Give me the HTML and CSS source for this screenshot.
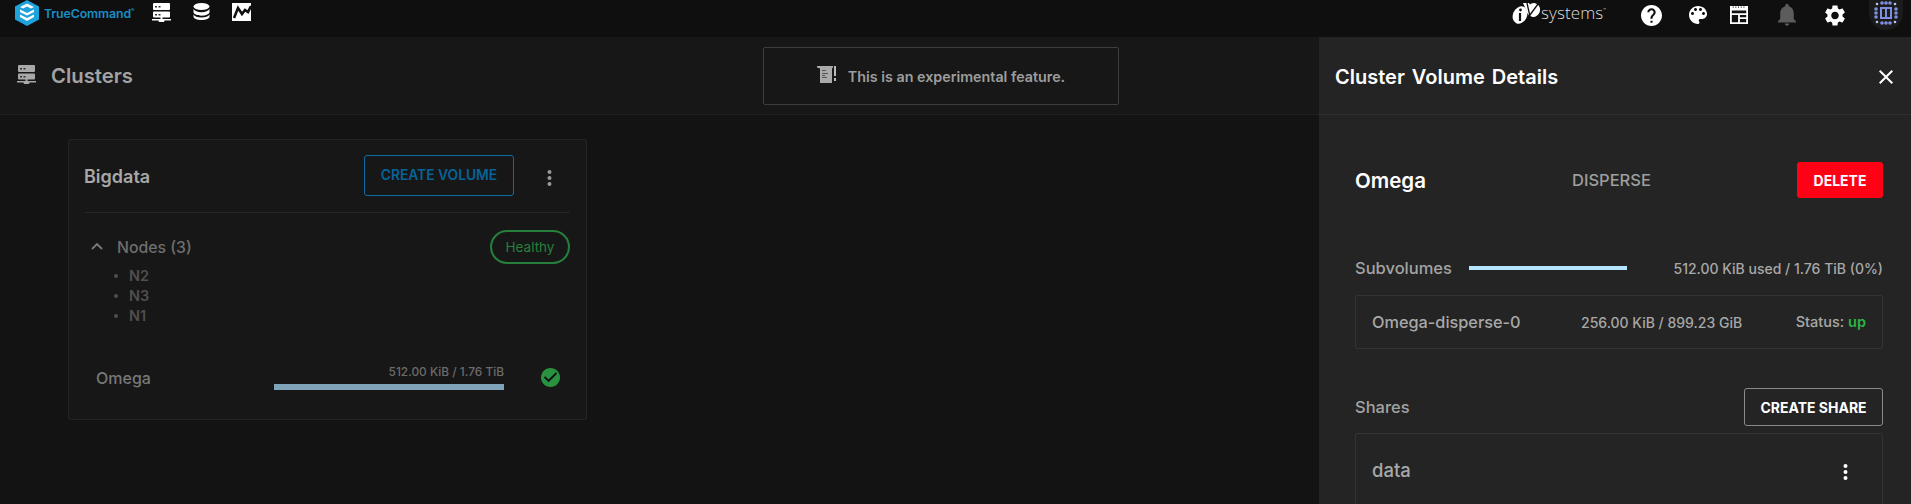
FILE: index.html
```html
<!DOCTYPE html>
<html lang="en">
<head>
<meta charset="utf-8">
<title>TrueCommand Clusters</title>
<link rel="stylesheet" href="styles.css">
</head>
<body>
<header class="topbar">
  <div class="brand">
    <svg class="logo" viewBox="0 0 24 26"><path fill="#1ea3dc" d="M12 0l12 6.500v13L12 26 0 19.500v-13z"/><path fill="#fff" d="M12 3.500l7 3.500-3 1.600-4-2-4 2-3-1.600zM5 9.500l7 3.500 7-3.500v2.500l-7 3.500L5 12zM5 14.500l7 3.500 7-3.500V17l-7 4-7-4z"/><path fill="#1ea3dc" d="M9.500 10.500L12 9l2.500 1.500L12 12z"/></svg>
    <span class="brand-name">TrueCommand<sup class="tm">®</sup></span>
  </div>
  <nav class="nav-icons">
    <svg class="nav-icon" viewBox="0 0 19 19"><path fill="#fff" d="M2 0h15a1 1 0 0 1 1 1v5a1 1 0 0 1-1 1H2a1 1 0 0 1-1-1V1a1 1 0 0 1 1-1zm0 8.500h15a1 1 0 0 1 1 1v4a1 1 0 0 1-1 1H2a1 1 0 0 1-1-1v-4a1 1 0 0 1 1-1zM8.500 14.500h2V16H19v1.500h-6.500a3 2 0 0 1-6 0H0V16h8.500z"/><path fill="#333" d="M3 3h2v1.500H3zM6.500 3h2v1.500h-2zM3 11h2v1.500H3zM6.500 11h2v1.500h-2z"/></svg>
    <svg class="nav-icon db" viewBox="0 0 17 17"><ellipse cx="8.500" cy="3.500" rx="8" ry="3.500" fill="#fff"/><path fill="#fff" d="M.5 6c1 2 4 3.200 8 3.200s7-1.200 8-3.200v3c0 2-3.500 3.700-8 3.700S.5 11 .5 9zM.5 11.500c1 2 4 3 8 3s7-1 8-3V13.500c0 2-3.500 3.500-8 3.500s-8-1.500-8-3.500z"/></svg>
    <svg class="nav-icon chart" viewBox="0 0 19 18"><path fill="#fff" d="M0 0h19v18H0z"/><path fill="none" stroke="#111" stroke-width="2.600" d="M2 15L6 5l4 6 3-4 3 2 3-6"/></svg>
  </nav>
  <div class="top-right">
    <div class="ix">
      <svg class="ix-mark" viewBox="0 0 28 22"><ellipse cx="8" cy="13" rx="7" ry="9" fill="#fff" transform="rotate(25 8 13)"/><ellipse cx="21.500" cy="8" rx="6.500" ry="7" fill="#fff" transform="rotate(25 21.500 8)"/><path fill="#fff" d="M11 1l6 0 4 7-5 4z"/><path stroke="#111" stroke-width="1.300" fill="none" d="M15 1l4 18M26 2L15 17"/><path stroke="#111" stroke-width="2.200" d="M8 11v8"/><circle cx="8.500" cy="8" r="1.400" fill="#111"/></svg>
      <span class="ix-name">systems<sup class="tm2">™</sup></span>
    </div>
    <svg class="tool help" viewBox="2 2 20 20"><path fill="#fff" d="M12 2C6.480 2 2 6.480 2 12s4.480 10 10 10 10-4.480 10-10S17.520 2 12 2zm1 17h-2v-2h2v2zm2.070-7.750l-.9.920C13.450 12.900 13 13.500 13 15h-2v-.5c0-1.100.45-2.100 1.170-2.830l1.240-1.260c.37-.36.59-.86.59-1.410 0-1.100-.9-2-2-2s-2 .9-2 2H8c0-2.210 1.790-4 4-4s4 1.790 4 4c0 .88-.36 1.680-.93 2.250z"/></svg>
    <svg class="tool palette" viewBox="3 3 18 18"><path fill="#fff" d="M12 3c-4.970 0-9 4.030-9 9s4.030 9 9 9c.83 0 1.500-.67 1.500-1.500 0-.39-.15-.74-.39-1.010-.23-.26-.38-.61-.38-.99 0-.83.67-1.500 1.500-1.500H16c2.760 0 5-2.240 5-5 0-4.420-4.030-8-9-8zm-5.500 9c-.83 0-1.500-.67-1.500-1.500S5.670 9 6.500 9 8 9.670 8 10.500 7.330 12 6.500 12zm3-4C8.670 8 8 7.330 8 6.500S8.670 5 9.500 5s1.500.67 1.500 1.500S10.330 8 9.500 8zm5 0c-.83 0-1.500-.67-1.500-1.500S13.670 5 14.500 5s1.500.67 1.500 1.500S15.330 8 14.500 8zm3 4c-.83 0-1.500-.67-1.500-1.500S16.670 9 17.500 9s1.500.67 1.500 1.500-.67 1.500-1.500 1.500z"/></svg>
    <svg class="tool table" viewBox="0 0 20 20"><path fill="#fff" d="M0 0h20v20H0z"/><path fill="#111" d="M2 5h16v3H2zM2 10h7v8H2zM11 10h7v2.500h-7zM11 14.500h7V18h-7zM3 .5h1V2H3zM6 .5h1V2H6zM9 .5h1V2H9zM12 .5h1V2h-1zM15 .5h1V2h-1z"/></svg>
    <svg class="tool bell" viewBox="4 2 16 20"><path fill="#5c5c5c" d="M12 22c1.100 0 2-.9 2-2h-4c0 1.100.89 2 2 2zm6-6v-5c0-3.070-1.640-5.640-4.500-6.320V4c0-.83-.67-1.500-1.500-1.500s-1.500.67-1.500 1.500v.68C7.630 5.360 6 7.920 6 11v5l-2 2v1h16v-1l-2-2z"/></svg>
    <svg class="tool gear" viewBox="2.500 2 19 20"><path fill="#fff" d="M19.140 12.940c.04-.3.06-.61.06-.94 0-.32-.02-.64-.07-.94l2.030-1.580c.18-.14.23-.41.12-.61l-1.920-3.320c-.12-.22-.37-.29-.59-.22l-2.390.96c-.5-.38-1.030-.7-1.620-.94l-.36-2.540c-.04-.24-.24-.41-.48-.41h-3.840c-.24 0-.43.17-.47.41l-.36 2.540c-.59.24-1.130.57-1.620.94l-2.390-.96c-.22-.08-.47 0-.59.22L2.740 8.870c-.12.21-.08.47.12.61l2.030 1.580c-.05.3-.09.63-.09.94s.02.64.07.94l-2.030 1.580c-.18.14-.23.41-.12.61l1.920 3.320c.12.22.37.29.59.22l2.390-.96c.5.38 1.030.7 1.620.94l.36 2.540c.05.24.24.41.48.41h3.840c.24 0 .44-.17.47-.41l.36-2.540c.59-.24 1.130-.56 1.620-.94l2.390.96c.22.08.47 0 .59-.22l1.920-3.320c.12-.22.07-.47-.12-.61l-2.010-1.580zM12 15.600c-1.980 0-3.600-1.620-3.600-3.600s1.620-3.600 3.600-3.600 3.600 1.620 3.600 3.600-1.620 3.600-3.600 3.600z"/></svg>
    <div class="avatar">
      <svg class="avatar-art" viewBox="0 0 24 24"><g fill="#7f8fe0"><path fill-rule="evenodd" d="M6 6h12v12H6zM8 8v8h3V8zM13 8v8h3V8z"/><circle cx="2" cy="8" r="1.800"/><circle cx="2" cy="12" r="1.800"/><circle cx="2" cy="16" r="1.800"/><circle cx="22" cy="8" r="1.800"/><circle cx="22" cy="12" r="1.800"/><circle cx="22" cy="16" r="1.800"/><circle cx="8" cy="2" r="1.800"/><circle cx="12" cy="2" r="1.800"/><circle cx="16" cy="2" r="1.800"/><circle cx="8" cy="22" r="1.800"/><circle cx="12" cy="22" r="1.800"/><circle cx="16" cy="22" r="1.800"/></g><g fill="#b9c2f0"><circle cx="3" cy="3" r="1.300"/><circle cx="21" cy="3" r="1.300"/><circle cx="3" cy="21" r="1.300"/><circle cx="21" cy="21" r="1.300"/></g></svg>
    </div>
  </div>
</header>

<div class="workspace">
  <main class="content">
    <div class="page-head">
      <div class="page-title">
        <svg class="title-icon" viewBox="0 0 19 19"><path fill="#a8a8a8" d="M2 0h15a1 1 0 0 1 1 1v5a1 1 0 0 1-1 1H2a1 1 0 0 1-1-1V1a1 1 0 0 1 1-1zm0 8.500h15a1 1 0 0 1 1 1v4a1 1 0 0 1-1 1H2a1 1 0 0 1-1-1v-4a1 1 0 0 1 1-1zM8.500 14.500h2V16H19v1.500h-6.500a3 2 0 0 1-6 0H0V16h8.500z"/><path fill="#333" d="M3 3h2v1.500H3zM6.500 3h2v1.500h-2zM3 11h2v1.500H3zM6.500 11h2v1.500h-2z"/></svg>
        <h1 class="title-text">Clusters</h1>
      </div>
      <div class="notice">
        <svg class="beaker" viewBox="0 0 20 20"><path fill="#aaa" d="M0 1h16v1.500l-1 1V18H3V3.500L0 2.500z"/><path fill="#555" d="M5 5h4v1H5zM5 8h6v1H5zM5 10h3v1H5zM5 12h5v1H5z"/><path fill="#bbb" d="M17 1h2v10h-2zM17 13h2v3h-2z"/></svg>
        <span class="notice-text">This is an experimental feature.</span>
      </div>
    </div>
    <section class="card">
      <div class="card-head">
        <h2 class="card-title">Bigdata</h2>
        <button class="btn-outline-blue">CREATE VOLUME</button>
        <svg class="dots dim-dots" viewBox="0 0 4 16"><circle cx="2" cy="2" r="2"/><circle cx="2" cy="8" r="2"/><circle cx="2" cy="14" r="2"/></svg>
      </div>
      <div class="nodes">
        <div class="nodes-main">
          <div class="nodes-head">
            <svg class="chev" viewBox="0 0 12 8"><path fill="none" stroke="#7a7a7a" stroke-width="1.800" d="M1 7l5-5 5 5"/></svg>
            <span class="nodes-label">Nodes (3)</span>
          </div>
          <ul class="node-list">
            <li>N2</li>
            <li>N3</li>
            <li>N1</li>
          </ul>
        </div>
        <span class="pill">Healthy</span>
      </div>
      <div class="vol-row">
        <span class="vol-name">Omega</span>
        <div class="vol-usage">
          <span class="vol-size">512.00 KiB / 1.76 TiB</span>
          <div class="vol-bar"></div>
        </div>
        <svg class="vol-check" viewBox="2 2 20 20"><path fill="#2a9140" d="M12 2C6.480 2 2 6.480 2 12s4.480 10 10 10 10-4.480 10-10S17.520 2 12 2z"/><path fill="#111" d="M10 17l-5-5 1.410-1.410L10 14.170l7.590-7.590L19 8z"/></svg>
      </div>
    </section>
  </main>

  <aside class="panel">
    <div class="panel-head">
      <h2 class="panel-title">Cluster Volume Details</h2>
      <svg class="close" viewBox="5 5 14 14"><path fill="#fff" d="M19 6.410L17.590 5 12 10.590 6.410 5 5 6.410 10.590 12 5 17.590 6.410 19 12 13.410 17.590 19 19 17.590 13.410 12z"/></svg>
    </div>
    <div class="panel-body">
      <div class="vol-head">
        <h3 class="vol-title">Omega</h3>
        <span class="vol-type">DISPERSE</span>
        <button class="btn-delete">DELETE</button>
      </div>
      <div class="sub-head">
        <span class="section-label">Subvolumes</span>
        <div class="sub-bar"></div>
        <span class="sub-used">512.00 KiB used / 1.76 TiB (0%)</span>
      </div>
      <div class="sub-box">
        <span class="sub-name">Omega-disperse-0</span>
        <span class="sub-size">256.00 KiB / 899.23 GiB</span>
        <span class="sub-status">Status: <b class="up">up</b></span>
      </div>
      <div class="shares-head">
        <span class="section-label">Shares</span>
        <button class="btn-outline-white">CREATE SHARE</button>
      </div>
      <div class="share-box">
        <span class="share-name">data</span>
        <svg class="dots white-dots" viewBox="0 0 4 16"><circle cx="2" cy="2" r="2"/><circle cx="2" cy="8" r="2"/><circle cx="2" cy="14" r="2"/></svg>
      </div>
    </div>
  </aside>
</div>
</body>
</html>
```

FILE: styles.css
```css
* { box-sizing: border-box; }
html, body { margin: 0; height: 504px; overflow: hidden; }
body {
  background: #131313;
  font-family: Inter, "Open Sans", "Liberation Sans", sans-serif;
  color: #aaa;
  display: flex;
  flex-direction: column;
}
h1, h2, h3 { margin: 0; }
button { font-family: inherit; cursor: pointer; background: none; padding: 0; }

.topbar {
  height: 37px;
  flex: none;
  background: #0f0f0f;
  display: flex;
  align-items: flex-start;
}
.brand { display: flex; align-items: flex-start; margin-left: 15px; width: 137px; }
.logo { width: 24px; height: 26px; flex: none; }
.brand-name {
  margin: 5px 0 0 5px;
  font-size: 12.300px;
  line-height: 18px;
  font-weight: 600;
  color: #1a8ec4;
  letter-spacing: -0.1px;
  white-space: nowrap;
}
.tm { font-size: 5px; vertical-align: top; line-height: 10px; }
.nav-icons { display: flex; align-items: flex-start; padding-top: 3px; }
.nav-icon { width: 19px; height: 19px; display: block; }
.nav-icon.db { width: 17px; height: 17px; margin-left: 22px; }
.nav-icon.chart { width: 19px; height: 18px; margin-left: 22px; }
.top-right { margin-left: auto; display: flex; align-items: flex-start; }
.ix { display: flex; align-items: flex-start; margin-top: 2px; width: 129px; }
.ix-mark { width: 28px; height: 22px; flex: none; }
.ix-name {
  margin-left: 1px;
  font-size: 17px;
  line-height: 22px;
  font-weight: 300;
  color: #ddd;
  font-family: "Open Sans", sans-serif;
  letter-spacing: 0.1px;
  white-space: nowrap;
}
.tm2 { font-size: 4px; vertical-align: top; line-height: 16px; }
.tool { display: block; margin-top: 5px; height: 21px; }
.tool.help { width: 21px; margin-right: 27px; }
.tool.palette { width: 18px; height: 18px; margin: 6px 23px 0 0; }
.tool.table { width: 18px; height: 18px; margin: 6px 30px 0 0; }
.tool.bell { width: 18px; height: 23px; margin: 3px 29px 0 0; }
.tool.gear { width: 20px; margin-right: 24px; }
.avatar {
  width: 34px;
  height: 30px;
  margin: 0 8px 0 0;
  border-radius: 0 0 17px 17px;
  background: #1b1b1b;
  display: flex;
  justify-content: center;
  padding-top: 1px;
}
.avatar-art { width: 24px; height: 24px; }

.workspace { flex: 1; min-height: 0; display: flex; }
.content { flex: 1; min-width: 0; }
.page-head {
  height: 78px;
  background: #171717;
  border-bottom: 1px solid #202020;
  display: grid;
  grid-template-columns: 763px 356px;
}
.page-title { display: flex; align-items: center; padding: 0 0 1px 17px; }
.title-icon { width: 19px; height: 19px; flex: none; margin-bottom: 2px; }
.title-text { margin-left: 15px; font-size: 20.300px; font-weight: 600; color: #a3a3a3; }
.notice {
  margin-top: 10px;
  height: 58px;
  border: 1px solid #3d3d3d;
  border-radius: 2px;
  display: flex;
  align-items: center;
  justify-content: center;
  gap: 11px;
}
.beaker { width: 20px; height: 20px; margin-top: -2px; }
.notice-text { font-size: 14.300px; font-weight: 600; color: #9d9d9d; }

.card {
  width: 519px;
  height: 281px;
  margin: 24px 0 0 68px;
  background: #171717;
  border: 1px solid #242424;
  border-radius: 2px;
  padding: 0 16px;
}
.card-head {
  height: 73px;
  border-bottom: 1px solid #262626;
  display: flex;
  align-items: center;
  padding-bottom: 2px;
}
.card-title { font-size: 18px; font-weight: 600; color: #a8a8a8; margin: 2px 0 0 -1px; }
.btn-outline-blue {
  margin-left: auto;
  width: 150px;
  height: 41px;
  border: 1px solid #0b6da3;
  border-radius: 3px;
  color: #06639a;
  font-size: 13.800px;
  font-weight: 600;
}
.dots { display: block; width: 5px; height: 16px; }
.dim-dots { margin: 5px 18px 0 33px; fill: #9a9a9a; }
.white-dots { fill: #fff; }
.nodes { display: flex; justify-content: space-between; align-items: flex-start; padding-top: 17px; }
.nodes-main { display: flex; flex-direction: column; }
.nodes-head { display: flex; align-items: center; height: 35px; padding-left: 6px; }
.chev { width: 12px; height: 8px; margin-bottom: 4px; }
.nodes-label { margin-left: 14px; font-size: 15.800px; font-weight: 500; color: #6e6e6e; }
.node-list {
  list-style: none;
  margin: 1px 0 0;
  padding: 0 0 0 29px;
  color: #4f4f4f;
  font-size: 14.500px;
  font-weight: 600;
  line-height: 20px;
}
.node-list li { display: flex; align-items: center; }
.node-list li::before {
  content: "";
  width: 4px;
  height: 4px;
  border-radius: 50%;
  background: #4f4f4f;
  margin-right: 11px;
}
.pill {
  width: 80px;
  height: 34px;
  border: 2px solid #26803b;
  border-radius: 17px;
  color: #26803b;
  font-size: 13.500px;
  display: flex;
  align-items: center;
  justify-content: center;
}
.vol-row { display: flex; align-items: center; margin-top: 38px; padding-left: 11px; height: 26px; }
.vol-name { width: 178px; font-size: 16px; font-weight: 500; color: #777; margin-top: 2px; }
.vol-usage { width: 230px; display: flex; flex-direction: column; align-items: flex-end; }
.vol-size { font-size: 11.900px; font-weight: 500; color: #6b6b6b; line-height: 14px; }
.vol-bar { width: 100%; height: 6px; margin-top: 5px; background: #7fa3b8; }
.vol-check { width: 19px; height: 19px; margin-left: 37px; }

.panel {
  width: 592px;
  flex: none;
  background: #242424;
  color: #a8a8a8;
}
.panel-head {
  height: 78px;
  border-bottom: 1px solid #303030;
  display: flex;
  align-items: center;
  justify-content: space-between;
  padding: 2px 18px 0 16px;
}
.panel-title { font-size: 20px; font-weight: 600; color: #fff; word-spacing: 2px; }
.close { width: 14px; height: 14px; }
.panel-body { padding: 0 28px 0 36px; }
.vol-head {
  display: grid;
  grid-template-columns: 217px 1fr auto;
  align-items: center;
  margin-top: 47px;
}
.vol-title { font-size: 20.500px; font-weight: 600; color: #fff; }
.vol-type { font-size: 16.500px; font-weight: 500; color: #9e9e9e; }
.btn-delete {
  width: 86px;
  height: 36px;
  border: 0;
  border-radius: 3px;
  background: #ff0015;
  color: #fff;
  font-size: 14px;
  font-weight: 700;
}
.sub-head { display: flex; align-items: center; margin-top: 60px; height: 20px; }
.section-label { font-size: 16.500px; font-weight: 500; color: #a3a3a3; }
.sub-head .section-label { flex: none; width: 113px; }
.sub-bar { width: 158px; height: 4px; margin-left: 1px; background: #b3e5fc; }
.sub-used { margin-left: auto; font-size: 14px; font-weight: 500; color: #a8a8a8; }
.sub-box {
  margin-top: 17px;
  height: 54px;
  border: 1px solid #333;
  border-radius: 2px;
  display: grid;
  grid-template-columns: 209px 1fr auto;
  align-items: center;
  padding: 0 16px;
}
.sub-name { font-size: 16.300px; font-weight: 500; }
.sub-size { font-size: 14px; font-weight: 500; }
.sub-status { font-size: 14.500px; font-weight: 500; padding-bottom: 1px; }
.up { font-weight: 600; color: #2fb344; }
.shares-head { display: flex; align-items: center; justify-content: space-between; margin-top: 39px; }
.btn-outline-white {
  width: 139px;
  height: 38px;
  border: 1px solid #8a8a8a;
  border-radius: 3px;
  color: #fff;
  font-size: 14px;
  font-weight: 700;
}
.share-box {
  margin-top: 7px;
  height: 90px;
  border: 1px solid #333;
  border-radius: 2px;
  display: flex;
  align-items: flex-start;
  justify-content: space-between;
  padding: 24px 34px 0 16px;
}
.share-name { font-size: 18.500px; font-weight: 500; line-height: 24px; }
.share-box .dots { margin-top: 6px; }
```
